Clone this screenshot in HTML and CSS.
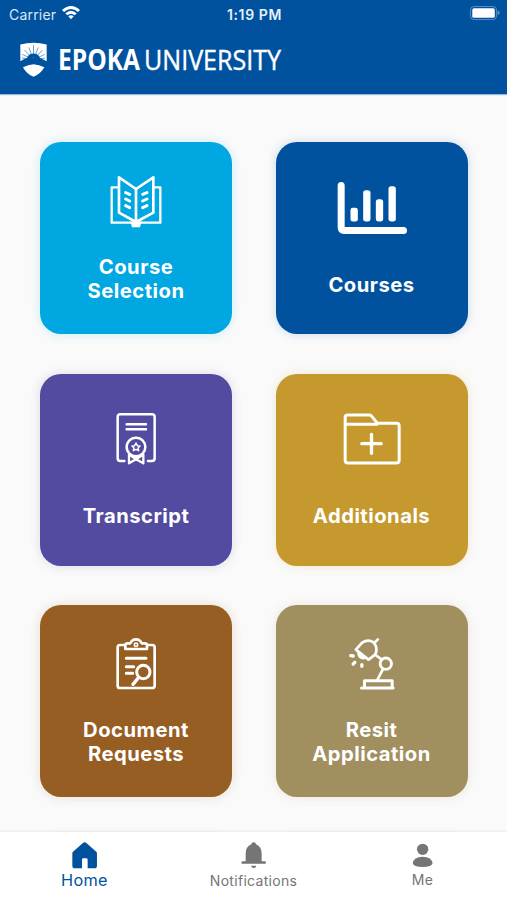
FILE: index.html
```html
<!DOCTYPE html>
<html lang="en">
<head>
    <meta charset="UTF-8">
    <meta name="viewport" content="width=device-width, initial-scale=1.0">
    <title>Epoka University</title>
    <link rel="stylesheet" href="styles.css">
</head>
<body>

    <header class="header">
        <div class="status-bar">
            <div class="carrier">
                <span>Carrier</span>
                <svg class="wifi" viewBox="0 0 54 42">
                    <path d="M0 12Q27-12 54 12L48 18Q27 0 6 18Z"/>
                    <path d="M10 22Q27 7 44 22L38 28Q27 18 16 28Z"/>
                    <path d="M19 31Q27 24 35 31L27 40Z"/>
                </svg>
            </div>
            <div class="time">1:19 PM</div>
            <div class="battery-wrap">
                <svg class="battery" viewBox="0 0 92 44">
                    <rect x="1.5" y="1.5" width="80" height="40" rx="11" fill="none" stroke="#fff" stroke-opacity=".35" stroke-width="3"/>
                    <rect x="7" y="7" width="69" height="29" rx="5" fill="#fff"/>
                    <path d="M85 14q6 3 6 7t-6 7z" fill="#fff" fill-opacity=".4"/>
                </svg>
            </div>
        </div>

        <div class="brand">
            <svg class="shield" viewBox="0 0 82 108">
                <path d="M1 7Q41-4 81 7V58Q60 44 41 47Q20 44 1 58Z" fill="#fff"/>
                <path d="M9 76Q25 68 41 67Q58 68 74 76Q63 96 41 105Q19 96 9 76Z" fill="#fff"/>
                <path d="M20 54Q22 34 41 34T62 54Q41 40 20 54Z" fill="#00529f"/>
                <path d="M41 38V9M35 38L27 16M47 38L55 16M29 40L14 24M53 40L68 24M24 45L7 37M58 45L75 37M23 50L6 48M59 50L76 48" stroke="#00529f" stroke-width="1.7"/>
            </svg>
            <svg class="wordmark" viewBox="0 0 240 44">
                <text class="word-bold" x="0" y="32" textLength="82" lengthAdjust="spacingAndGlyphs">EPOKA</text>
                <text class="word-light" x="86" y="32" textLength="137" lengthAdjust="spacingAndGlyphs">UNIVERSITY</text>
            </svg>
        </div>
    </header>

    <main class="grid">
        <a class="card card-selection">
            <svg class="card-icon" viewBox="18 26 240 171">
                <path d="M84 69H65V175H211V69H192" stroke-width="7"/>
                <path d="M138 74L87 39V145L138 173L190 145V39Z" stroke-width="8"/>
                <path d="M138 74V170" stroke-width="8"/>
                <path d="M107 85L119 90M107 104L119 110M107 124L119 130M171 85L158 90M171 104L158 110M171 124L158 130" stroke-width="9"/>
                <path d="M121 171L138 177L155 171L150 189H126Z" fill="#fff" stroke="none"/>
            </svg>
            <span>Course<br>Selection</span>
        </a>
        <a class="card card-courses">
            <svg class="card-icon" viewBox="34.5 44.5 240 171">
                <path d="M62 61V187Q62 196 71 196H249" stroke-width="21"/>
                <g fill="#fff" stroke="none">
                    <rect x="90" y="128" width="22" height="41" rx="7"/>
                    <rect x="128" y="75" width="22" height="94" rx="8"/>
                    <rect x="166" y="102" width="22" height="67" rx="8"/>
                    <rect x="204" y="63" width="22" height="106" rx="8"/>
                </g>
            </svg>
            <span>Courses</span>
        </a>
        <a class="card card-transcript">
            <svg class="card-icon" viewBox="18 34 240 171">
                <path d="M103 184H91Q83 184 83 176V52Q83 44 91 44H186Q194 44 194 52V176Q194 184 186 184H174" stroke-width="7.5"/>
                <path d="M110 74H168M110 89H168" stroke-width="7.5"/>
                <circle cx="138" cy="142" r="28" stroke-width="7.5"/>
                <path d="M138 130L142 138L150 139L144 145L146 153L138 149L130 153L132 145L126 139L134 138Z" stroke-width="4.5"/>
                <path d="M117 164V191L138 179L160 191V164M138 172V178M124 169L138 179L153 169" stroke-width="7"/>
            </svg>
            <span>Transcript</span>
        </a>
        <a class="card card-additionals">
            <svg class="card-icon" viewBox="34.5 34 240 171">
                <path d="M74 74V54Q74 46 82 46H147Q151 46 154 50L171 71H228Q236 71 236 79V182Q236 190 228 190H82Q74 190 74 182V74H170" stroke-width="9"/>
                <path d="M153 104V161M124 132H182" stroke-width="10"/>
            </svg>
            <span>Additionals</span>
        </a>
        <a class="card card-documents">
            <svg class="card-icon" viewBox="18 35 240 171">
                <path d="M105 62H90Q83 62 83 69V184Q83 191 90 191H186Q194 191 194 184V69Q194 62 186 62H173" stroke-width="8"/>
                <path d="M106 74V62Q106 57 113 57H121Q126 45 138 45T155 57H164Q171 57 171 62V74Z" stroke-width="8"/>
                <circle cx="138" cy="61" r="5" stroke-width="5"/>
                <path d="M109 102H168M109 127H131M109 147H128" stroke-width="9"/>
                <circle cx="160" cy="143" r="20" stroke-width="9"/>
                <path d="M146 159L129 180" stroke-width="10"/>
            </svg>
            <span>Document<br>Requests</span>
        </a>
        <a class="card card-resit">
            <svg class="card-icon" viewBox="34.5 35 240 171">
                <path d="M106 76L125 55Q143 43 159 54Q174 71 164 91L144 106ZM161 56L172 45M165 92L183 105" stroke-width="8"/>
                <path d="M112 86Q113 105 132 103Z" fill="#fff" stroke-width="4"/>
                <circle cx="196" cy="118" r="17" stroke-width="8.5"/>
                <path d="M187 135L171 166" stroke-width="8"/>
                <path d="M132 187V169H215V187M123 191H218" stroke-width="9"/>
                <path d="M91 94L98 95M98 119L103 114M124 121V126" stroke-width="10"/>
            </svg>
            <span>Resit<br>Application</span>
        </a>
        <a class="card card-more-left"></a>
        <a class="card card-more-right"></a>
    </main>

    <nav class="tab-bar">
        <a class="tab active">
            <svg viewBox="0 0 76 80">
                <path d="M32 4Q38-2 44 4L73 29Q75 31 75 34V71Q75 79 67 79H47V53Q47 49 43 49H34Q30 49 30 53V79H9Q1 79 1 71V34Q1 31 3 29Z"/>
            </svg>
            <span>Home</span>
        </a>
        <a class="tab">
            <svg viewBox="0 0 76 80">
                <path d="M31 7Q31 1 38 1T45 7Q62 14 62 34V58H72Q75 58 75 62T72 65H4Q1 65 1 62T4 58H14V34Q14 14 31 7ZM30 71H46Q44 78 38 78T30 71Z"/>
            </svg>
            <span>Notifications</span>
        </a>
        <a class="tab tab-me">
            <svg viewBox="0 0 76 80">
                <circle cx="38" cy="22" r="17"/>
                <path d="M8 63Q11 45 38 44Q65 45 68 63Q66 75 38 75T8 63Z"/>
            </svg>
            <span>Me</span>
        </a>
    </nav>

</body>
</html>
```

FILE: styles.css
```css
:root {
    --blue: #00529f;
    --page: #fafafa;
    --inactive: #757575;
}

* { box-sizing: border-box; }

body {
    margin: 0;
    height: 100vh;
    display: flex;
    flex-direction: column;
    overflow: hidden;
    background: var(--page);
    font-family: Inter, "Liberation Sans", sans-serif;
}

/* header */
.header {
    flex: none;
    height: 94px;
    background: var(--blue);
    color: #fff;
    box-shadow: 0 1px 1px rgba(0, 82, 159, 0.4);
}

.status-bar {
    display: grid;
    grid-template-columns: 1fr auto 1fr;
    align-items: center;
    height: 28px;
    padding: 0 7px 0 9px;
    font-size: 14px;
}

.carrier {
    display: flex;
    align-items: center;
    gap: 6px;
    letter-spacing: 0.2px;
    color: #dce8f4;
}

.wifi {
    width: 18px;
    height: 14px;
    margin-top: -2px;
    fill: #fff;
}

.time {
    font-weight: 600;
    font-size: 14px;
    letter-spacing: 0.6px;
    color: #e6f0f8;
}

.battery-wrap {
    display: flex;
    justify-content: flex-end;
}

.battery {
    width: 30px;
    height: 14.4px;
    margin-top: -1px;
}

.brand {
    display: flex;
    align-items: flex-start;
    gap: 11px;
    padding: 14px 0 0 20px;
}

.shield {
    width: 27px;
    height: 36px;
}

.wordmark {
    width: 240px;
    height: 44px;
    margin-top: -4px;
    overflow: visible;
    fill: #fff;
    font-family: "Open Sans", "Noto Sans", sans-serif;
    font-size: 28px;
}

.word-bold { font-weight: 700; }

.word-light {
    font-weight: 400;
    stroke: #fff;
    stroke-width: 0.4;
}

/* cards */
.grid {
    flex: 1;
    min-height: 0;
    display: grid;
    grid-template-columns: 192px 192px;
    grid-auto-rows: 192px;
    gap: 39.5px 43.5px;
    padding: 48.4px 0 0 40px;
    overflow: hidden;
}

.card {
    --shade: 0, 82, 159;
    display: flex;
    flex-direction: column;
    align-items: center;
    justify-content: space-around;
    padding: 19px 0;
    border-radius: 21px;
    background: rgb(var(--shade));
    box-shadow: 0 0 9px 2px rgba(var(--shade), 0.13);
    color: #fff;
    font-size: 20.2px;
    font-weight: 700;
    line-height: 24.3px;
    letter-spacing: 0.5px;
    text-align: center;
}

.card-icon {
    width: 80px;
    height: 57px;
    fill: none;
    stroke: #fff;
    stroke-linecap: round;
    stroke-linejoin: round;
}

.card-selection { --shade: 0, 167, 225; }
.card-courses { --shade: 0, 82, 159; }
.card-transcript { --shade: 82, 75, 160; }
.card-additionals { --shade: 197, 153, 45; }
.card-documents { --shade: 150, 94, 35; }
.card-resit { --shade: 161, 143, 96; }
.card-more-left { --shade: 190, 100, 50; }
.card-more-right { --shade: 110, 110, 110; }

/* bottom navigation */
.tab-bar {
    flex: none;
    display: flex;
    height: 68.5px;
    background: #fff;
    box-shadow: 0 -1px 2px rgba(0, 0, 0, 0.06);
    z-index: 1;
}

.tab {
    flex: 1;
    display: flex;
    flex-direction: column;
    align-items: center;
    padding-top: 10.5px;
    color: var(--inactive);
    font-size: 14px;
    line-height: 20px;
    letter-spacing: 0.3px;
}

.tab svg {
    width: 25.3px;
    height: 26.7px;
    margin-bottom: 2.5px;
    fill: currentColor;
}

.tab.active {
    color: var(--blue);
    font-size: 16.3px;
}

.tab.active svg { margin-bottom: 1.5px; }
.tab-me svg { margin-bottom: 1.5px; }
```
